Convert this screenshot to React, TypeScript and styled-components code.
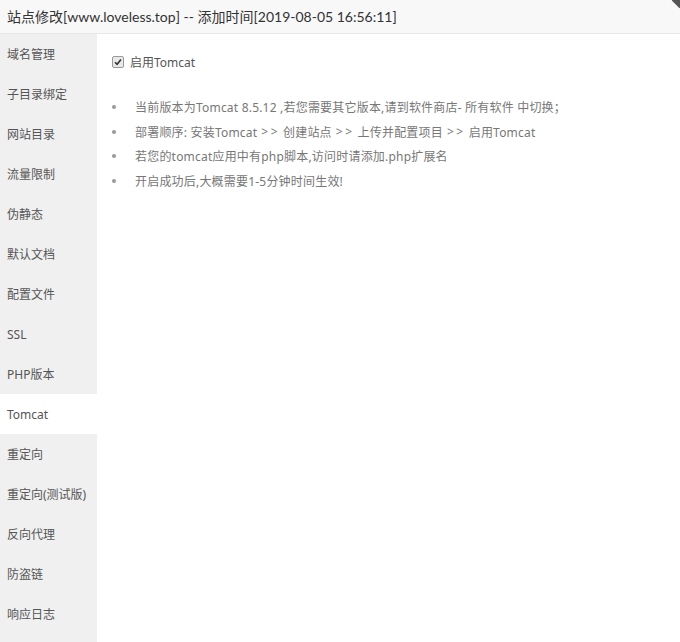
import React from "react";
import styled, { createGlobalStyle } from "styled-components";

const Global = createGlobalStyle`
  html, body { margin: 0; padding: 0; background: #fff; }
  body { font-family: "Noto Sans", "Noto Sans CJK SC", sans-serif; }
  #root { height: 642px; }
`;

const Layer = styled.div`
  position: relative;
  width: 680px;
  height: 642px;
  display: flex;
  flex-direction: column;
  background: #fff;
  overflow: hidden;
`;

const Title = styled.div`
  height: 34px;
  flex: none;
  box-sizing: border-box;
  border-bottom: 1px solid #e8e8e8;
  background: #f8f8f8;
  padding: 0 7px 1px;
  display: flex;
  align-items: center;
  font-family: "Lato", "Noto Sans CJK SC", sans-serif;
  font-size: 14px;
  color: #333;
  white-space: nowrap;
`;

const Close = styled.span`
  position: absolute;
  top: -5px;
  right: -5px;
  width: 11px;
  height: 11px;
  background: #555;
  transform: rotate(45deg);
`;

const Body = styled.div`
  flex: 1;
  display: flex;
  min-height: 0;
`;

const Side = styled.ul`
  list-style: none;
  margin: 0;
  padding: 0;
  width: 97px;
  flex: none;
  background: #f0f0f0;
`;

const SideItem = styled.li<{ $active?: boolean }>`
  height: 40px;
  display: flex;
  align-items: center;
  padding-left: 7px;
  font-size: 12px;
  color: #555;
  background: ${(p) => (p.$active ? "#fff" : "transparent")};
  white-space: nowrap;
`;

const Content = styled.div`
  flex: 1;
  padding: 21px 0 0 15px;
`;

const CheckRow = styled.label`
  display: flex;
  align-items: center;
  gap: 6px;
  font-size: 12px;
  color: #555;
  height: 14px;
`;

const Box = styled.span`
  width: 10px;
  height: 10px;
  border: 1px solid #999;
  border-radius: 2px;
  background: #e9e9e9;
  display: flex;
  align-items: center;
  justify-content: center;
`;

const Tips = styled.ul`
  list-style: none;
  margin: 26px 0 0;
  padding: 0;
`;

const Tip = styled.li`
  display: flex;
  align-items: center;
  height: 24.5px;
  font-size: 12px;
  letter-spacing: 0.2px;
  color: #777;
  white-space: nowrap;
  &::before {
    content: "";
    width: 4px;
    height: 4px;
    border-radius: 50%;
    background: #999;
    margin: 0 19px 0 0;
    flex: none;
  }
`;

const Arrow = styled.span`
  letter-spacing: 2.5px;
  margin: 0 3px 0 4px;
`;

const items = [
  "域名管理",
  "子目录绑定",
  "网站目录",
  "流量限制",
  "伪静态",
  "默认文档",
  "配置文件",
  "SSL",
  "PHP版本",
  "Tomcat",
  "重定向",
  "重定向(测试版)",
  "反向代理",
  "防盗链",
  "响应日志",
];

export default function App() {
  return (
    <>
      <Global />
      <Layer>
        <Title>站点修改[www.loveless.top] -- 添加时间[2019-08-05 16:56:11]</Title>
        <Close />
        <Body>
          <Side>
            {items.map((t) => (
              <SideItem key={t} $active={t === "Tomcat"}>
                {t}
              </SideItem>
            ))}
          </Side>
          <Content>
            <CheckRow>
              <Box>
                <svg width="8" height="8" viewBox="0 0 8 8">
                  <path d="M1 4.2 L3.1 6.3 L7 1.6" fill="none" stroke="#333" strokeWidth="1.6" />
                </svg>
              </Box>
              启用Tomcat
            </CheckRow>
            <Tips>
              <Tip>当前版本为Tomcat 8.5.12 ,若您需要其它版本,请到软件商店- 所有软件 中切换；</Tip>
              <Tip>
                部署顺序: 安装Tomcat<Arrow>&gt;&gt;</Arrow>创建站点<Arrow>&gt;&gt;</Arrow>上传并配置项目
                <Arrow>&gt;&gt;</Arrow>启用Tomcat
              </Tip>
              <Tip>若您的tomcat应用中有php脚本,访问时请添加.php扩展名</Tip>
              <Tip>开启成功后,大概需要1-5分钟时间生效!</Tip>
            </Tips>
          </Content>
        </Body>
      </Layer>
    </>
  );
}
